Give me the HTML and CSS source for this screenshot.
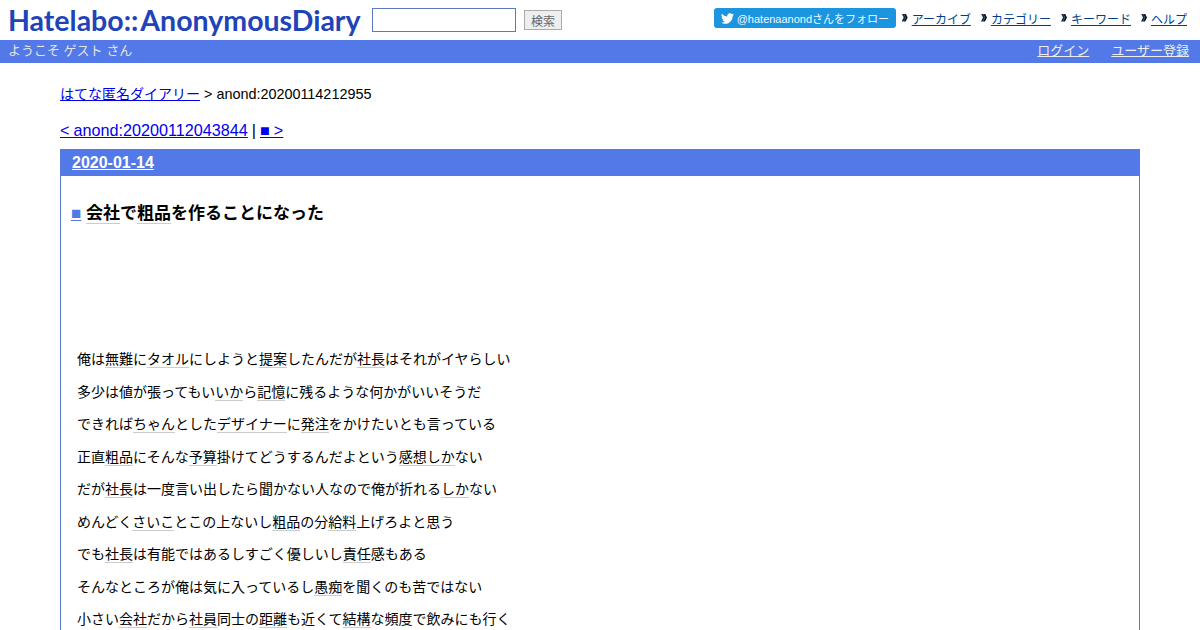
FILE: index.html
```html
<!DOCTYPE html>
<html lang="ja">
<head>
  <meta charset="UTF-8">
  <link rel="stylesheet" href="styles.css">
  <title>会社で粗品を作ることになった</title>
</head>
<body>

  <div id="banner">
    <a class="logo" href="#">Hatelabo::<span class="logo-tail">AnonymousDiary</span></a>
    <form class="search">
      <input class="search-input" type="text">
      <button class="search-btn" type="button">検索</button>
    </form>
    <div class="banner-right">
      <a class="follow" href="#">
        <svg class="bird" viewBox="0 0 24 24"><path d="M23.95 4.57a10 10 0 0 1-2.83.78 4.96 4.96 0 0 0 2.17-2.72c-.95.56-2 .96-3.13 1.19a4.92 4.92 0 0 0-8.38 4.48A13.98 13.98 0 0 1 1.64 3.16a4.92 4.92 0 0 0 1.52 6.57 4.9 4.9 0 0 1-2.23-.62v.06a4.92 4.92 0 0 0 3.95 4.83 4.9 4.9 0 0 1-2.21.08 4.94 4.94 0 0 0 4.6 3.42A9.87 9.87 0 0 1 0 19.54a13.94 13.94 0 0 0 7.55 2.21c9.05 0 14-7.5 14-13.98 0-.21 0-.42-.02-.63a9.94 9.94 0 0 0 2.46-2.55z"/></svg>
        @hatenaanondさんをフォロー
      </a>
      <a class="menu-link" href="#">アーカイブ</a>
      <a class="menu-link" href="#">カテゴリー</a>
      <a class="menu-link" href="#">キーワード</a>
      <a class="menu-link" href="#">ヘルプ</a>
    </div>
  </div>

  <div id="bar">
    <span>ようこそ ゲスト さん</span>
    <div class="bar-links">
      <a href="#">ログイン</a>
      <a href="#">ユーザー登録</a>
    </div>
  </div>

  <div id="main">
    <p class="crumb"><a href="#">はてな匿名ダイアリー</a> &gt; anond:20200114212955</p>
    <p class="pager"><a href="#">&lt; anond:20200112043844</a> | <a href="#">■ &gt;</a></p>

    <div class="day">
      <h2 class="day-title"><a href="#">2020-01-14</a></h2>
      <div class="day-body">
        <h3 class="entry-title"><a class="sanchor" href="#">■</a> <a class="kw" href="#">会社</a>で<a class="kw" href="#">粗品</a>を作ることになった</h3>
        <div class="ad-space"></div>
        <p>俺は<a class="kw" href="#">無難</a>に<a class="kw" href="#">タオル</a>にしようと<a class="kw" href="#">提案</a>したんだが<a class="kw" href="#">社長</a>はそれがイヤらしい</p>
        <p>多少は値が張ってもい<a class="kw" href="#">いか</a>ら<a class="kw" href="#">記憶</a>に残るような何かがいいそうだ</p>
        <p>できれば<a class="kw" href="#">ちゃん</a>とした<a class="kw" href="#">デザイナー</a>に<a class="kw" href="#">発注</a>をかけたいとも言っている</p>
        <p>正直<a class="kw" href="#">粗品</a>にそんな<a class="kw" href="#">予算</a>掛けてどうするんだよという<a class="kw" href="#">感想</a><a class="kw" href="#">しか</a>ない</p>
        <p>だが<a class="kw" href="#">社長</a>は一度言い出したら聞かない人なので俺が折れる<a class="kw" href="#">しか</a>ない</p>
        <p>めんどく<a class="kw" href="#">さいこ</a>とこの上ないし<a class="kw" href="#">粗品</a>の分<a class="kw" href="#">給料</a>上げろよと思う</p>
        <p>でも<a class="kw" href="#">社長</a>は有能ではあるしすごく優しいし<a class="kw" href="#">責任</a>感もある</p>
        <p>そんなところが俺は気に入っているし<a class="kw" href="#">愚痴</a>を聞くのも苦ではない</p>
        <p>小さい<a class="kw" href="#">会社</a>だから<a class="kw" href="#">社員</a>同士の<a class="kw" href="#">距離</a>も近くて<a class="kw" href="#">結構</a>な頻度で飲みにも行く</p>
      </div>
    </div>
  </div>

</body>
</html>
```

FILE: styles.css
```css
html {
  overflow: hidden;
}

body {
  margin: 0;
  padding: 0;
  background-color: #fff;
  color: #000;
  font-family: "Liberation Sans", "Noto Sans CJK JP", sans-serif;
  font-size: 14px;
}

a {
  color: #00e;
}

#banner {
  display: flex;
  align-items: flex-start;
  height: 40px;
}

.logo {
  margin: 3px 0 0 8px;
  width: 351px;
  font-family: "Lato", sans-serif;
  font-size: 28.5px;
  font-weight: 700;
  line-height: 34px;
  color: #2044b8;
  text-decoration: none;
  white-space: nowrap;
}

.logo-tail {
  margin-left: 2px;
}

.search {
  display: flex;
  align-items: center;
  gap: 8px;
  margin: 8px 0 0 13px;
}

.search-input {
  box-sizing: border-box;
  width: 144px;
  height: 24px;
  padding: 0 4px;
  border: 1px solid #5e78c8;
  background-color: #fff;
}

.search-btn {
  box-sizing: border-box;
  width: 38px;
  height: 20px;
  padding: 0;
  border: 1px solid #aaa;
  background-color: #eee;
  color: #666;
  font-family: inherit;
  font-size: 12px;
}

.banner-right {
  display: flex;
  align-items: center;
  height: 20px;
  margin: 8px 13px 0 auto;
}

.follow {
  display: flex;
  align-items: center;
  gap: 3px;
  box-sizing: border-box;
  width: 182px;
  height: 20px;
  padding: 0 8px 0 7px;
  border-radius: 3px;
  background-color: #1b95e0;
  color: #f0f8ff;
  font-size: 11px;
  text-decoration: none;
  white-space: nowrap;
}

.bird {
  width: 13px;
  height: 13px;
  fill: #fff;
  flex-shrink: 0;
}

.menu-link {
  position: relative;
  margin-left: 20px;
  color: #003f88;
  font-size: 12px;
}

.follow + .menu-link {
  margin-left: 16px;
}

/* двойная стрелка перед ссылкой */
.menu-link::before,
.menu-link::after {
  content: "";
  position: absolute;
  top: 4px;
  width: 4px;
  height: 8px;
  clip-path: polygon(0 0, 50% 0, 100% 50%, 50% 100%, 0 100%, 50% 50%);
}

.menu-link::before {
  left: -10px;
  background-color: #0a2a5a;
}

.menu-link::after {
  left: -8px;
  background-color: #111;
}

#bar {
  display: flex;
  justify-content: space-between;
  align-items: flex-start;
  height: 23px;
  padding: 0 11px 0 8px;
  background-color: #5279e7;
  color: #e4e4e4;
  font-size: 13px;
  line-height: 21px;
}

.bar-links {
  display: flex;
  gap: 22px;
}

.bar-links a {
  color: #eee;
}

#main {
  margin: 0 60px;
  padding-top: 23px;
}

.crumb {
  margin: 0;
  font-size: 14.4px;
  line-height: 17px;
}

.crumb a {
  font-size: 14px;
}

.pager {
  margin: 17px 0 9px;
  font-size: 16.2px;
  line-height: 20px;
  word-spacing: -0.5px;
}

.day {
  height: 600px;
  border-left: 1px solid #5a78d8;
  border-right: 1px solid #5a78d8;
}

.day-title {
  margin: 0;
  height: 27px;
  padding-left: 11px;
  background-color: #5279e7;
  font-size: 16px;
  line-height: 27px;
}

.day-title a {
  color: #fff;
}

.day-body {
  padding: 0 16px;
}

.day-body p {
  margin: 0 0 8px;
  line-height: 24.5px;
}

.entry-title {
  margin: 27px 0 0 -6px;
  font-size: 17px;
  line-height: 22px;
}

.sanchor {
  color: #5279e7;
}

.kw {
  color: #000;
  text-decoration: none;
  border-bottom: 1px solid #ccc;
}

.ad-space {
  height: 122px;
}
```
